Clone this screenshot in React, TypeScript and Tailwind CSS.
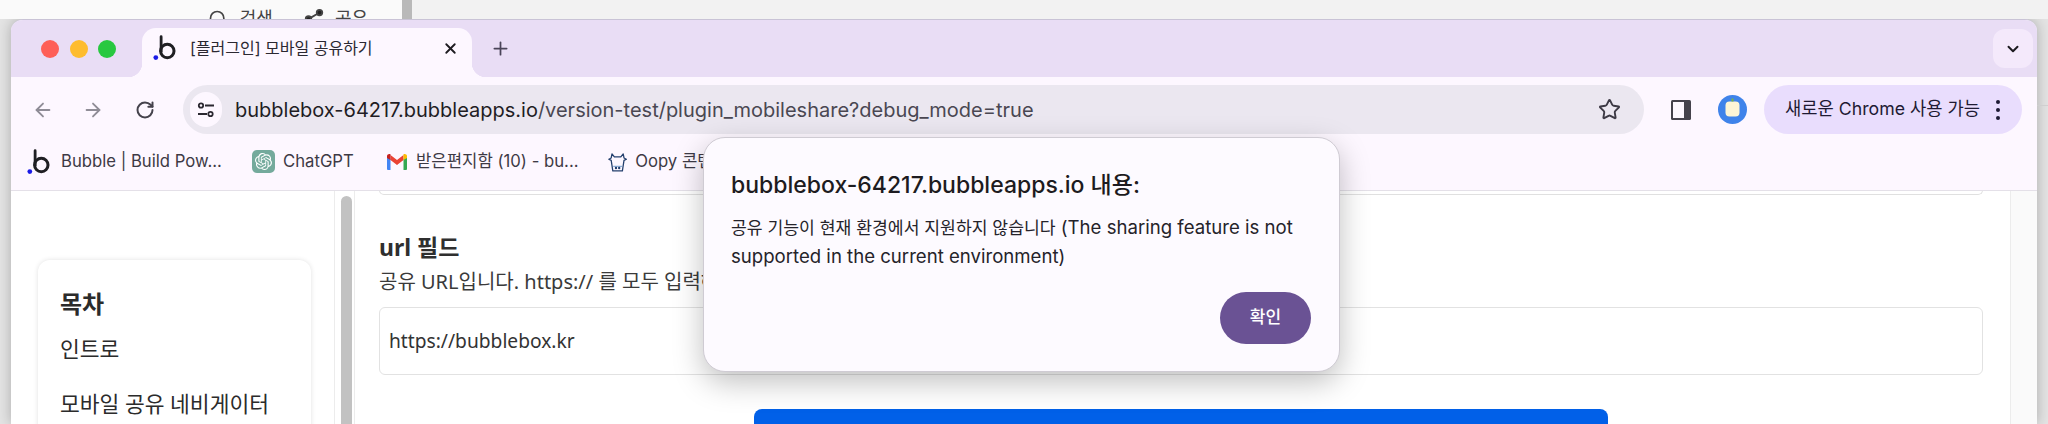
import React from "react";
import { SiOpenai } from "react-icons/si";
import { ArrowLeft, ArrowRight, RotateCw, Star, X, Plus, ChevronDown, Search, Share2 } from "lucide-react";

const ui = "font-['Inter','Noto_Sans_CJK_KR',sans-serif]";
const page = "font-['Noto_Sans','Noto_Sans_CJK_KR',sans-serif]";

function BubbleLogo({ size = 26 }: { size?: number }) {
  return (
    <svg width={size} height={size} viewBox="0 0 24 24" fill="none">
      <path d="M7.500 1.500V15" stroke="#1f1f23" strokeWidth="2.600" strokeLinecap="round" />
      <circle cx="13.200" cy="14.800" r="6.200" stroke="#1f1f23" strokeWidth="2.800" />
      <circle cx="2.600" cy="20.800" r="2.200" fill="#1a1ae6" />
    </svg>
  );
}

function Gmail() {
  return (
    <svg width="22" height="20" viewBox="0 0 22 18">
      <path d="M1 17V3.500L4.500 6V17H2a1 1 0 0 1-1-1z" fill="#4285f4" />
      <path d="M21 17V3.500L17.500 6V17H20a1 1 0 0 0 1-1z" fill="#34a853" />
      <path d="M4.500 7V2L11 7l6.500-5v5L11 12z" fill="#ea4335" />
      <path d="M1 5V3c0-2 2.500-2.600 3.500-1.700V7z" fill="#c5221f" />
      <path d="M21 5V3c0-2-2.500-2.600-3.500-1.700V7z" fill="#fbbc04" />
    </svg>
  );
}

function Oopy() {
  return (
    <svg width="24" height="28" viewBox="0 0 24 26" fill="none" stroke="#24406e" strokeWidth="1.600" strokeLinejoin="round">
      <path d="M5 3l3 3.500h8L19 3l1 5 3 1.500-3 1.500-2 13H6L4 11 1 9.500 4 8z" />
      <path d="M6.500 18.500h11" stroke="#8fb0d8" />
      <circle cx="10" cy="20.500" r="0.700" fill="#24406e" />
      <circle cx="14" cy="20.500" r="0.700" fill="#24406e" />
    </svg>
  );
}

function Bookmark({ icon, label, className }: { icon: React.ReactNode; label: string; className: string }) {
  return (
    <div className={`flex items-center gap-[8px] shrink-0 ${className}`}>
      {icon}
      <span className="text-[16.700px] text-[#3d3a45] whitespace-nowrap">{label}</span>
    </div>
  );
}

export default function App() {
  return (
    <div className={`relative w-[2048px] h-[424px] overflow-hidden bg-[#e4e4e4] ${ui}`}>
      {/* page behind the browser window */}
      <div className="flex h-[19px] overflow-hidden">
        <div className="w-[402px] bg-[#fafafa] flex justify-end items-start gap-[30px] pr-[34px] pt-[7px] text-[#444] text-[18px] leading-[24px]">
          <span className="flex items-center gap-[12px]"><Search size={20} />검색</span>
          <span className="flex items-center gap-[10px]"><Share2 size={22} fill="#222" />공유</span>
        </div>
        <div className="w-[10px] bg-[#b9b9b9]" />
        <div className="flex-1 bg-[#f2f2f2]" />
      </div>
      <div className="absolute left-[2037px] top-[105px] w-[11px] h-px bg-[#cfcfcf]" />

      {/* browser window */}
      <div className="ml-[11px] w-[2026px] h-[405px] flex flex-col rounded-t-[12px] overflow-hidden border-t border-[#c9c3d6] bg-white shadow-[0_0_14px_rgba(0,0,0,0.25)]">
        {/* tab strip */}
        <div className="h-[57px] bg-[#e9ddf5] flex shrink-0 items-end pl-[30px] pr-[4px]">
          <div className="flex items-center gap-[10.500px] h-[49px] pb-[7px]">
            <span className="w-[18px] h-[18px] rounded-full bg-[#fe5f57]" />
            <span className="w-[18px] h-[18px] rounded-full bg-[#febc2e]" />
            <span className="w-[18px] h-[18px] rounded-full bg-[#28c840]" />
          </div>
          <div className="relative ml-[26px] w-[330px] h-[49px] bg-[#fdf7ff] rounded-t-[14px] flex items-center pl-[11px] pr-[13px] pb-[9px]">
            <div className="absolute -left-[14px] bottom-0 w-[14px] h-[14px] bg-[radial-gradient(circle_at_0_0,transparent_14px,#fdf7ff_14.500px)]" />
            <div className="absolute -right-[14px] bottom-0 w-[14px] h-[14px] bg-[radial-gradient(circle_at_100%_0,transparent_14px,#fdf7ff_14.500px)]" />
            <BubbleLogo />
            <span className="ml-[11px] text-[16px] text-[#2b2831] whitespace-nowrap">[플러그인] 모바일 공유하기</span>
            <X size={17} strokeWidth={2.600} className="ml-auto text-[#1d1b20]" />
          </div>
          <Plus size={21} strokeWidth={2} className="ml-[18px] mb-[18px] text-[#4a4458]" />
          <div className="ml-auto w-[40px] h-[39px] mb-[9px] rounded-[12px] bg-[#f4e9fb] flex items-center justify-center">
            <ChevronDown size={18} strokeWidth={2.600} className="text-[#1d1b20]" />
          </div>
        </div>

        {/* toolbar */}
        <div className="h-[65px] bg-[#fdf7ff] flex shrink-0 items-center py-[8px] pl-[21px]">
          <ArrowLeft size={22} className="text-[#8f8c96]" />
          <ArrowRight size={22} className="ml-[28px] text-[#8f8c96]" />
          <RotateCw size={20} strokeWidth={2.400} className="ml-[31px] text-[#45424c]" />
          <div className="ml-[28px] w-[1461px] h-[49px] rounded-full bg-[#ebe7f0] flex items-center pl-[7px] pr-[23px]">
            <div className="w-[32px] h-[35px] rounded-full bg-[#fdf7ff] flex items-center justify-center">
              <svg width="18" height="16" viewBox="0 0 18 16" fill="none" stroke="#2b2831" strokeWidth="1.800">
                <circle cx="4" cy="3.500" r="2.200" /><path d="M8 3.500h9M1 12h9" /><circle cx="13.500" cy="12" r="2.200" />
              </svg>
            </div>
            <div className="ml-[13px] text-[20px] whitespace-nowrap text-[#1f1d24]">
              bubblebox-64217.bubbleapps.io<span className="text-[#4a4752]">/version-test/plugin_mobileshare?debug_mode=true</span>
            </div>
            <Star size={23} strokeWidth={2} className="ml-auto text-[#3d3a45]" />
          </div>
          <svg className="ml-[27px]" width="20" height="20" viewBox="0 0 20 20">
            <rect x="0" y="0" width="20" height="20" rx="1.500" fill="#45424c" />
            <rect x="2" y="2" width="11" height="16" fill="#fdf7ff" />
          </svg>
          <svg className="ml-[27px]" width="29" height="29" viewBox="0 0 29 29">
            <circle cx="14.500" cy="14.500" r="14.500" fill="#3f83ea" />
            <rect x="7.500" y="6.500" width="14" height="15" rx="4" fill="#fdf5d6" />
            <path d="M14.500 3.500v3" stroke="#7cb342" strokeWidth="2" />
          </svg>
          <div className="ml-[17px] w-[258px] h-[49px] rounded-full bg-[#e9ddfd] flex items-center pl-[21px] pr-[22px]">
            <span className="text-[17.700px] text-[#1e1a33] whitespace-nowrap">새로운 Chrome 사용 가능</span>
            <div className="ml-auto flex flex-col gap-[4px]">
              <span className="w-[4px] h-[4px] rounded-full bg-[#1e1a33]" />
              <span className="w-[4px] h-[4px] rounded-full bg-[#1e1a33]" />
              <span className="w-[4px] h-[4px] rounded-full bg-[#1e1a33]" />
            </div>
          </div>
        </div>

        {/* bookmarks */}
        <div className="h-[49px] bg-[#fdf7ff] flex shrink-0 items-center border-b border-[#e4e0e8] pb-[8px] pl-[16px] overflow-hidden">
          <Bookmark className="w-[225px]" icon={<BubbleLogo />} label="Bubble | Build Pow..." />
          <Bookmark className="w-[134px]" icon={<span className="w-[23px] h-[23px] rounded-[5px] bg-[#74aa9c] flex items-center justify-center"><SiOpenai size={17} className="text-white" /></span>} label="ChatGPT" />
          <Bookmark className="w-[222px]" icon={<Gmail />} label="받은편지함 (10) - bu..." />
          <Bookmark className="w-[120px]" icon={<Oopy />} label="Oopy 콘텐츠" />
        </div>

        {/* content */}
        <div className={`flex-1 flex min-h-0 bg-white ${page}`}>
          <div className="w-[324px] shrink-0 pl-[27px] pr-[23px] pt-[69px] border-r border-[#ececec]">
            <div className="h-[300px] rounded-[12px] bg-white shadow-[0_0_5px_rgba(0,0,0,0.12)] px-[22px] pt-[25px] text-[#2b2b2b]">
              <div className="text-[24px] leading-[38px] font-bold">목차</div>
              <div className="mt-[10px] text-[21.500px] leading-[32px]">인트로</div>
              <div className="mt-[23px] text-[21.500px] leading-[32px] whitespace-nowrap">모바일 공유 네비게이터</div>
            </div>
          </div>
          <div className="w-[20px] shrink-0 border-r border-[#ececec] pl-[6px] pt-[5px]">
            <div className="w-[11px] h-[240px] rounded-full bg-[#c2c2c2]" />
          </div>
          <div className="w-[1655px] shrink-0 overflow-hidden pl-[24px] pr-[27px]">
            <div className="h-[5px] -mt-[1px] rounded-b-[8px] border border-t-0 border-[#e0e0e0]" />
            <div className="mt-[38px] text-[23px] leading-[28px] font-bold text-[#2f2f2f]">url 필드</div>
            <div className="mt-[7px] text-[20px] leading-[28px] text-[#3a3a3a]">공유 URL입니다. https:// 를 모두 입력해주세요.</div>
            <div className="mt-[11px] h-[68px] rounded-[6px] border border-[#e2e2e2] flex items-center pl-[9px] text-[19.200px] text-[#333]">https://bubblebox.kr</div>
            <div className="ml-[375px] mt-[34px] w-[854px] h-[40px] rounded-[8px] bg-[#0160e8]" />
          </div>
          <div className="flex-1 border-l border-[#ececec] bg-[#fafafa]" />
        </div>
      </div>

      {/* alert dialog */}
      <div className="absolute left-[703px] top-[137px] w-[637px] h-[235px] rounded-[22px] bg-[#fdfaff] border border-[#cfcbd3] shadow-[0_10px_30px_rgba(0,0,0,0.25)] pl-[27px] pr-[28px] pt-[32px]">
        <div className="text-[23px] leading-[30px] font-medium text-[#1d1b20] whitespace-nowrap">bubblebox-64217.bubbleapps.io 내용:</div>
        <div className="mt-[13px] text-[18.600px] leading-[28px] text-[#25232a]"><span className="text-[17.200px]">공유 기능이 현재 환경에서 지원하지 않습니다</span> (The sharing feature is not supported in the current environment)</div>
        <div className="flex justify-end mt-[22px]">
          <div className="w-[91px] h-[52px] rounded-full bg-[#6a5294] text-white text-[17px] font-medium flex items-center justify-center">확인</div>
        </div>
      </div>
    </div>
  );
}
